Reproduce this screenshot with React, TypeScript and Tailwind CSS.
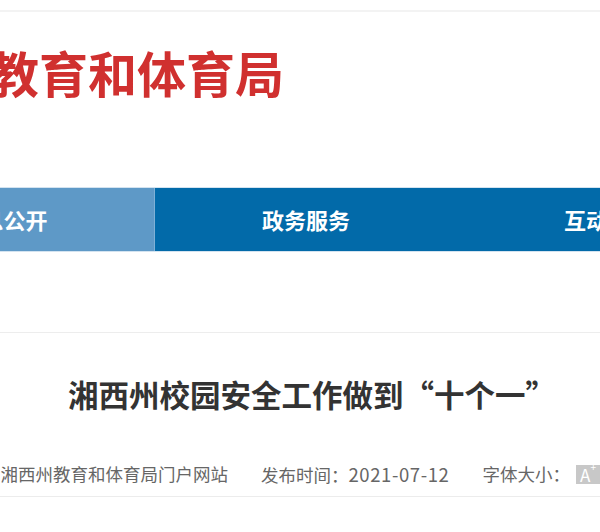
import React from "react";

const font = { fontFamily: '"Noto Sans CJK SC", "Noto Sans", sans-serif' };

const navItems = [
  { label: "信息公开", active: true },
  { label: "政务服务", active: false },
  { label: "互动交流", active: false }
];

export default function App() {
  return (
    <div className="w-[600px] h-[532px] overflow-hidden bg-white" style={font}>
      {/* top rule */}
      <div className="h-[10px]" />
      <div className="h-[2px] bg-[#f3f3f3]" />

      {/* site title */}
      <div className="pt-[35px] h-[175px]">
        <h1 className="ml-[-59px] whitespace-nowrap text-[49px] leading-[49px] font-bold text-[#d0302f]">
          州教育和体育局
        </h1>
      </div>

      {/* nav */}
      <nav className="h-[65px] border-y border-[#d3e3f0] flex ml-[-147px]">
        {navItems.map((item) => (
          <div
            key={item.label}
            className={
              "w-[302px] shrink-0 flex items-center justify-center text-[22px] font-bold text-white " +
              (item.active ? "bg-[#5e99c7] border-r border-[#7fb0d6]" : "bg-[#026aa9]")
            }
          >
            {item.label}
          </div>
        ))}
      </nav>

      {/* article header */}
      <div className="h-[80px]" />
      <div className="h-px bg-[#ededed]" />

      <div className="pl-[24px]">
        <h2 className="mt-[46px] text-center whitespace-nowrap text-[30.5px] leading-[31px] font-bold text-[#333]">
          湘西州校园安全工作做到“十个一”
        </h2>
      </div>

      <div className="mt-[55px] h-[32px] border-b border-[#ececec] flex items-start whitespace-nowrap text-[17.5px] leading-[18px] text-[#666] ml-[-52px]">
        <span className="mr-[33px]">来源：湘西州教育和体育局门户网站</span>
        <span className="mr-[33px]">
          发布时间：<span className="tracking-[0.6px] text-[18.5px]">2021-07-12</span>
        </span>
        <span className="mr-[6px]">字体大小：</span>
        <span className="w-[26px] h-[19px] bg-[#c8c8c8] text-white flex items-center justify-center text-[17px] leading-none">
          A<sup className="text-[10px] -mt-[6px]">+</sup>
        </span>
      </div>
    </div>
  );
}
